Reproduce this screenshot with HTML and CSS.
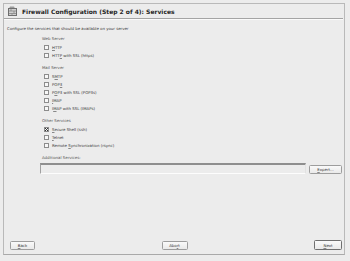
FILE: index.html
```html
<!DOCTYPE html>
<html>
<head>
<meta charset="utf-8">
<link rel="stylesheet" href="styles.css">
</head>
<body>
<div class="frame">
  <div class="header">
    <svg class="icon" width="9" height="10" viewBox="0 0 9 10">
      <path d="M2 0.5h4l1 2H1z" fill="#9a9a9a"/>
      <rect x="0.5" y="2.5" width="8" height="7" fill="#cfcfcf" stroke="#6e6e6e" stroke-width="1"/>
      <path d="M1 5h7M1 7.5h7M3 2.5v2.5M6 5v2.5M4 7.5v2" stroke="#7d7d7d" stroke-width="0.7"/>
    </svg>
    <div class="title">Firewall Configuration (Step 2 of 4): Services</div>
  </div>
  <div class="rule"></div>
  <div class="content">
    <div class="intro">Configure the services that should be available on your server</div>
    <div class="groups">
      <div class="group">
        <div class="glabel">Web Server</div>
        <div class="row"><span class="box"></span><span><u>H</u>TTP</span></div>
        <div class="row"><span class="box"></span><span>HTT<u>P</u> with SSL (https)</span></div>
      </div>
      <div class="group">
        <div class="glabel">Mail Server</div>
        <div class="row"><span class="box"></span><span>S<u>M</u>TP</span></div>
        <div class="row"><span class="box"></span><span>POP<u>3</u></span></div>
        <div class="row"><span class="box"></span><span>P<u>O</u>P3 with SSL (POP3s)</span></div>
        <div class="row"><span class="box"></span><span><u>I</u>MAP</span></div>
        <div class="row"><span class="box"></span><span>I<u>M</u>AP with SSL (IMAPs)</span></div>
      </div>
      <div class="group">
        <div class="glabel">Other Services</div>
        <div class="row"><span class="box checked"></span><span><u>S</u>ecure Shell (ssh)</span></div>
        <div class="row"><span class="box"></span><span><u>T</u>elnet</span></div>
        <div class="row"><span class="box"></span><span>Remote <u>S</u>ynchronization (rsync)</span></div>
      </div>
      <div class="glabel additional">Additional Services:</div>
      <div class="inputrow">
        <div class="input"></div>
        <div class="btn expert"><u>E</u>xpert...</div>
      </div>
    </div>
  </div>
  <div class="footer">
    <div class="btn back"><u>B</u>ack</div>
    <div class="btn abort">Abo<u>r</u>t</div>
    <div class="btn next"><u>N</u>ext</div>
  </div>
</div>
</body>
</html>
```

FILE: styles.css
```css
html, body {
  margin: 0;
  padding: 0;
  background: #ececec;
  font-family: "DejaVu Sans", sans-serif;
  color: #3a3a3a;
}
body {
  width: 350px;
  height: 261px;
  overflow: hidden;
}
.frame {
  box-sizing: border-box;
  margin: 3px 0 0 3px;
  width: 342px;
  height: 252px;
  border: 1px solid #b9b9b9;
  border-bottom-color: #a9a9a9;
  display: flex;
  flex-direction: column;
}
.header {
  height: 14px;
  display: flex;
  align-items: center;
  padding-left: 4px;
  gap: 5px;
}
.icon { display: block; }
.title {
  font-weight: bold;
  font-size: 6px;
  color: #262626;
  white-space: nowrap;
  padding-top: 1px;
}
.rule {
  height: 0;
  border-top: 1px solid #a4a4a4;
  border-bottom: 1px solid #fafafa;
  margin-right: 1px;
}
.content {
  flex: 1;
  padding: 5px 2px 0 3px;
  font-size: 3.9px;
}
.intro {
  height: 8px;
  line-height: 8px;
  white-space: nowrap;
}
.groups {
  padding-left: 35px;
}
.group { margin-top: 2px; }
.group + .group { margin-top: 5px; }
.glabel {
  height: 8px;
  line-height: 8px;
  color: #555;
  white-space: nowrap;
}
.row {
  height: 8px;
  display: flex;
  align-items: center;
  gap: 3px;
  padding-left: 2px;
  white-space: nowrap;
}
u {
  text-decoration-color: #888;
  text-decoration-thickness: 0.4px;
}
.box {
  box-sizing: border-box;
  width: 5px;
  height: 5px;
  border: 1px solid #8c8c8c;
  background: #f7f7f7;
  position: relative;
}
.box.checked::after {
  content: "";
  position: absolute;
  inset: 0;
  background:
    linear-gradient(45deg, transparent 42%, #333 42%, #333 58%, transparent 58%),
    linear-gradient(-45deg, transparent 42%, #333 42%, #333 58%, transparent 58%);
}
.additional { margin-top: 5px; }
.inputrow {
  margin-top: 1px;
  margin-left: -2px;
  display: flex;
  align-items: flex-end;
  gap: 3px;
}
.input {
  box-sizing: border-box;
  flex: 1;
  height: 11px;
  border-top: 2px solid #8e8e8e;
  border-left: 1px solid #a0a0a0;
  border-right: 1px solid #e2e2e2;
  border-bottom: 1px solid #fdfdfd;
  background: #ececec;
}
.btn {
  box-sizing: border-box;
  height: 9px;
  display: flex;
  align-items: center;
  justify-content: center;
  border: 1px solid #9d9d9d;
  border-radius: 1.5px;
  background: linear-gradient(#fafafa, #e9e9e9);
  font-size: 3.9px;
  color: #333;
  white-space: nowrap;
}
.expert { width: 33px; }
.footer {
  display: flex;
  justify-content: space-between;
  align-items: flex-end;
  padding: 0 2px 4px 6px;
}
.back { width: 25px; }
.abort { width: 26px; }
.next {
  width: 28px;
  height: 10px;
  border-color: #6f6f6f;
}
```
